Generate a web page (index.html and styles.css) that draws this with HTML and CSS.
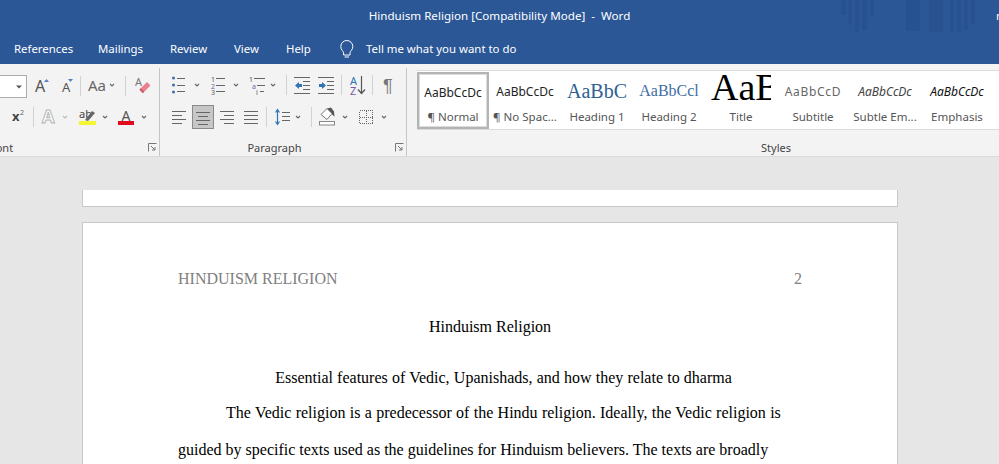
FILE: index.html
```html
<!DOCTYPE html>
<html lang="en">
<head>
<meta charset="utf-8">
<title>Hinduism Religion - Word</title>
<link rel="stylesheet" href="styles.css">
</head>
<body>
<header class="titlebar">
  <svg class="titlebar-art" width="160" height="40">
    <g fill="#234a85" opacity=".42">
      <rect x="1" y="0" width="5" height="15"/><rect x="8" y="0" width="4" height="24"/><rect x="15" y="0" width="4" height="32"/><rect x="22" y="0" width="5" height="30"/><rect x="30" y="0" width="4" height="16"/>
      <rect x="66" y="0" width="14" height="31"/><rect x="89" y="0" width="14" height="37"/><rect x="110" y="0" width="4" height="34"/><rect x="117" y="0" width="4" height="32"/><rect x="124" y="0" width="4" height="30"/><rect x="131" y="0" width="4" height="24"/>
    </g>
  </svg>
  <div class="doc-title">Hinduism Religion [Compatibility Mode]&nbsp; -&nbsp; Word</div>
  <div class="user-cut">n</div>
</header>
<nav class="tabs">
  <span class="tab t-ref">References</span>
  <span class="tab t-mail">Mailings</span>
  <span class="tab t-rev">Review</span>
  <span class="tab t-view">View</span>
  <span class="tab t-help">Help</span>
  <svg class="bulb" width="26" height="20"><path d="M3 16.5v-2.2c0-1.4-2.8-2.8-2.8-6.3a6 6 0 0 1 12 0c0 3.500-2.800 4.900-2.800 6.300v2.200zM4 18.500h4.400" fill="none" stroke="#fff" transform="translate(.6 -.5)"/></svg>
  <span class="tab">Tell me what you want to do</span>
</nav>
<section class="ribbon">
  <div class="group g-font">
    <div class="tool-row">
      <div class="combo"><svg width="8" height="6"><path d="M1 1.500l3 3 3-3z" fill="#555"/></svg></div>
      <svg width="30" height="24"><text x="8" y="19" class="ico-a">A</text><path d="M17 9l2.500-3 2.500 3z" fill="#4f81bd"/></svg>
      <svg width="21" height="24"><text x="5" y="19" class="ico-a small">A</text><path d="M11 6h5l-2.500 3z" fill="#4f81bd"/></svg>
      <svg width="4" height="24"><path d="M2.500 3v20" class="sep"/></svg>
      <svg width="25" height="24"><text x="6" y="18" class="ico-aa">Aa</text></svg>
      <svg width="10" height="24"><path d="M3 11l2 2 2-2" class="chev"/></svg>
      <svg width="16" height="24"><path d="M8.500 3v20" class="sep"/></svg>
      <svg width="18" height="24"><text x="2" y="13" class="ico-mini">A</text><path d="M7 16l7-7 3.500 3.500-7 7h-1z" fill="#ea7f8f"/><path d="M7 16l3.500 3.500" stroke="#c9586b" stroke-width="2"/></svg>
    </div>
    <div class="tool-row">
      <svg width="29" height="24"><text x="12" y="16" class="ico-x">x</text><text x="20" y="10" class="ico-sup">2</text></svg>
      <svg width="8" height="24"><path d="M4.500 2v20" class="sep"/></svg>
      <svg width="23" height="24"><text x="5" y="18" class="ico-outline">A</text></svg>
      <svg width="10" height="24"><path d="M3 11l2 2 2-2" class="chev light"/></svg>
      <svg width="30" height="24"><text x="9" y="13" class="ico-ab">ab</text><path d="M15 15l7-9 3 2-7 8z" fill="#666"/><rect x="9" y="16" width="17" height="4" fill="#f5f532"/></svg>
      <svg width="10" height="24"><path d="M3 11l2 2 2-2" class="chev"/></svg>
      <svg width="29" height="24"><text x="11.500" y="16" class="ico-red">A</text><rect x="8" y="16" width="16" height="4" fill="#e00b1c"/></svg>
      <svg width="10" height="24"><path d="M3 11l2 2 2-2" class="chev"/></svg>
    </div>
    <div class="group-label label-font">
      <span class="label-cut">Font</span>
      <svg class="launcher" width="9" height="9"><path d="M.5 8.500v-8h8M3 3l4 4M4 7h3V4" fill="none" stroke="#777"/></svg>
    </div>
  </div>
  <div class="group g-para">
    <div class="tool-row">
      <svg width="32" height="24"><g fill="#3f6fa8"><circle cx="13.500" cy="5" r="1.500"/><circle cx="13.500" cy="12" r="1.500"/><circle cx="13.500" cy="19" r="1.500"/></g><path d="M17 5.500h8M17 12.500h8M17 18.500h8" class="ln"/></svg>
      <svg width="10" height="24"><path d="M3 11l2 2 2-2" class="chev"/></svg>
      <svg width="29" height="24"><text x="9" y="8.500" class="ico-num">1</text><text x="9" y="15.500" class="ico-num pur">2</text><text x="9" y="22" class="ico-num">3</text><path d="M14 5.500h9M14 12.500h9M14 18.500h9" class="ln"/></svg>
      <svg width="10" height="24"><path d="M3 11l2 2 2-2" class="chev"/></svg>
      <svg width="27" height="24"><text x="8" y="9" class="ico-num">1</text><text x="11" y="15.500" class="ico-num pur">a</text><text x="15" y="22" class="ico-num">i</text><path d="M13 5.500h11M16 12.500h8M19 18.500h4" class="ln"/></svg>
      <svg width="10" height="24"><path d="M3 11l2 2 2-2" class="chev"/></svg>
      <svg width="16" height="24"><path d="M8.500 2v20" class="sep"/></svg>
      <svg width="24" height="24"><path d="M0 4.500h16M9 8.500h7M9 12.500h7M9 16.500h7M0 20.500h16" class="ln"/><path d="M1 12.500l4-3.500v2h3v3H5v2z" fill="#2e75b6"/></svg>
      <svg width="20" height="24"><path d="M0 4.500h16M9 8.500h7M9 12.500h7M9 16.500h7M0 20.500h16" class="ln"/><path d="M8 12.500l-4-3.500v2H1v3h3v2z" fill="#2e75b6"/></svg>
      <svg width="6" height="24"><path d="M3.500 2v20" class="sep"/></svg>
      <svg width="24" height="24"><text x="6" y="12" class="ico-sort">A</text><text x="6" y="22" class="ico-sort pur">Z</text><path d="M17.500 3v17M14 16.500l3.500 4 3.500-4" fill="none" stroke="#555" stroke-width="1.200"/></svg>
      <svg width="8" height="24"><path d="M4.500 2v20" class="sep"/></svg>
      <svg width="24" height="24"><text x="7" y="19" class="ico-pil">¶</text></svg>
    </div>
    <div class="tool-row">
      <svg width="32" height="24"><path d="M12 6.500h14M12 10.500h10M12 14.500h14M12 18.500h10" class="ln"/></svg>
      <svg class="tool-on" width="22" height="24"><path d="M4 7.500h14M6 11.500h10M4 15.500h14M6 19.500h10" class="ln"/></svg>
      <svg width="26" height="24"><path d="M6 6.500h14M10 10.500h10M6 14.500h14M10 18.500h10" class="ln"/></svg>
      <svg width="22" height="24"><path d="M4 6.500h14M4 10.500h14M4 14.500h14M4 18.500h14" class="ln"/></svg>
      <svg width="8" height="24"><path d="M4.500 2v20" class="sep"/></svg>
      <svg width="23" height="24"><path d="M7.500 5v14M5.500 7.500l2-3 2 3M5.500 16.500l2 3 2-3" fill="none" stroke="#2e75b6" stroke-width="1.200"/><path d="M12 7.500h8M12 11.500h8M12 15.500h8" class="ln"/></svg>
      <svg width="10" height="24"><path d="M3 11l2 2 2-2" class="chev"/></svg>
      <svg width="16" height="24"><path d="M8.500 2v20" class="sep"/></svg>
      <svg width="21" height="24"><path d="M2 9.500L8 3.500l5 5-5 6z" fill="#fff" stroke="#777"/><path d="M8 3.500l4-1 3 4 .5 5-2-1.500-1-2z" fill="#555"/><rect x=".5" y="16.500" width="15" height="3.500" fill="#fff" stroke="#888"/></svg>
      <svg width="10" height="24"><path d="M3 11l2 2 2-2" class="chev"/></svg>
      <svg width="29" height="24"><path d="M9.500 5.500h13v13h-13zM16 5.500v13M9.500 12h13" class="dotted"/></svg>
      <svg width="10" height="24"><path d="M3 11l2 2 2-2" class="chev"/></svg>
    </div>
    <div class="group-label label-para">
      <span class="label-center">Paragraph</span>
      <svg class="launcher" width="9" height="9"><path d="M.5 8.500v-8h8M3 3l4 4M4 7h3V4" fill="none" stroke="#777"/></svg>
    </div>
  </div>
  <div class="group g-styles">
    <div class="gallery">
      <div class="style selected"><span class="sample s-normal">AaBbCcDc</span><span class="style-name">¶ Normal</span></div>
      <div class="style"><span class="sample s-normal">AaBbCcDc</span><span class="style-name">¶ No Spac...</span></div>
      <div class="style"><span class="sample s-h1">AaBbC</span><span class="style-name">Heading 1</span></div>
      <div class="style"><span class="sample s-h2">AaBbCcl</span><span class="style-name">Heading 2</span></div>
      <div class="style"><span class="sample s-title">AaB</span><span class="style-name">Title</span></div>
      <div class="style"><span class="sample s-sub">AaBbCcD</span><span class="style-name">Subtitle</span></div>
      <div class="style"><span class="sample s-em1">AaBbCcDc</span><span class="style-name">Subtle Em...</span></div>
      <div class="style"><span class="sample s-em2">AaBbCcDc</span><span class="style-name">Emphasis</span></div>
    </div>
    <div class="group-label label-styles">Styles</div>
  </div>
</section>
<main class="canvas">
  <div class="page page-end"></div>
  <article class="page page-full">
    <div class="running-head"><span>HINDUISM RELIGION</span><span>2</span></div>
    <h1 class="doc-heading">Hinduism Religion</h1>
    <h2 class="doc-sub">Essential features of Vedic, Upanishads, and how they relate to dharma</h2>
    <p class="doc-body">The Vedic religion is a predecessor of the Hindu religion. Ideally, the Vedic religion is guided by specific texts used as the guidelines for Hinduism believers. The texts are broadly</p>
  </article>
</main>
</body>
</html>
```
FILE: styles.css
```css
* { box-sizing: border-box; }
html, body { margin: 0; height: 464px; overflow: hidden; }
body { width: 999px; background: #e6e6e6; font-family: "Noto Sans", "Open Sans", sans-serif; }
svg { display: block; flex: none; }

.titlebar { position: relative; height: 32px; background: #2b5797; color: #fff; display: flex; justify-content: center; align-items: center; font-size: 11.6px; overflow: hidden; }
.titlebar-art { position: absolute; left: 840px; top: 0; }
.doc-title { position: relative; top: -1px; }
.user-cut { position: absolute; left: 996px; top: 8px; }

.tabs { height: 32px; background: #2b5797; color: #fff; display: flex; align-items: center; padding-left: 14px; font-size: 11.4px; }
.t-ref { width: 84px; } .t-mail { width: 72px; } .t-rev { width: 64px; } .t-view { width: 52px; } .t-help { width: 54px; }
.bulb { margin-top: 1px; }

.ribbon { height: 93px; background: #f3f3f3; border-bottom: 1px solid #dadada; display: flex; }
.group { position: relative; flex: none; border-right: 1px solid #c6c6c6; height: 88px; margin-top: 4px; padding-top: 5px; }
.g-font { width: 160px; }
.g-para { width: 247px; }
.g-styles { width: 592px; border-right: 0; padding: 2px 0 0 10px; }
.tool-row { display: flex; height: 24px; margin-bottom: 8px; }
.combo { width: 27px; height: 23px; margin-top: 2px; background: #fff; border: 1px solid #ababab; border-left: 0; display: flex; justify-content: flex-end; align-items: center; padding-right: 3px; }
.tool-on { background: #c6c6c6; outline: 1px solid #8a8a8a; outline-offset: -1px; }

.sep { stroke: #d2d2d2; fill: none; }
.chev { stroke: #666; fill: none; stroke-width: 1.100; }
.chev.light { stroke: #bbb; }
.ln { stroke: #666; fill: none; }
.dotted { fill: none; stroke: #666; stroke-dasharray: 1 1; shape-rendering: crispEdges; }

text { font-family: "Noto Sans", sans-serif; }
.ico-a { font-size: 16px; fill: #555; }
.ico-a.small { font-size: 13px; }
.ico-aa { font-size: 15px; fill: #666; }
.ico-mini { font-size: 11px; fill: #777; }
.ico-x { font-size: 13px; font-weight: 700; fill: #444; }
.ico-sup { font-size: 7px; fill: #666; }
.ico-outline { font-size: 18px; font-weight: 700; fill: #fff; stroke: #b4b4b4; stroke-width: 1; }
.ico-ab { font-size: 11px; fill: #444; }
.ico-red { font-size: 14px; fill: #555; }
.ico-num { font-size: 7px; fill: #555; }
.ico-num.pur, .ico-sort.pur { fill: #7b5aa6; }
.ico-sort { font-size: 11px; fill: #2e75b6; }
.ico-pil { font-size: 18px; fill: #777; font-family: "Liberation Sans", sans-serif; }

.group-label { position: absolute; left: 0; right: 0; top: 73px; height: 14px; font-size: 11px; line-height: 14px; color: #444; }
.label-font, .label-para { display: flex; align-items: center; }
.label-cut { margin-left: -10px; }
.label-center { position: absolute; left: 0; right: 0; text-align: center; padding-right: 17px; }
.launcher { position: absolute; right: 2px; top: 2px; }
.label-styles { padding-left: 146px; text-align: center; }

.gallery { display: flex; height: 60px; background: #fff; border-top: 1px solid #dcdcdc; border-bottom: 1px solid #dcdcdc; }
.style { width: 72px; flex: none; display: flex; flex-direction: column; align-items: center; overflow: hidden; }
.style.selected { border: 2px solid #b4b4b4; outline: 1px solid #dcdcdc; outline-offset: -3px; margin-top: 1px; height: 57px; }
.sample { height: 38px; width: 60px; padding-top: 2px; display: flex; justify-content: center; align-items: center; white-space: nowrap; overflow: hidden; font-size: 12px; color: #222; flex: none; }
.style.selected .sample { height: 35px; }
.style-name { font-size: 11.500px; color: #555; white-space: nowrap; line-height: 16px; }
.s-h1 { font-family: "Liberation Serif", serif; font-size: 20px; color: #2e5f94; }
.s-h2 { font-family: "Liberation Serif", serif; font-size: 16px; color: #3e6ea4; }
.s-title { font-family: "Liberation Serif", serif; font-size: 38px; color: #000; justify-content: flex-start; padding: 0 0 6px; height: 30px; margin: 4px 0; line-height: 28px; }
.s-sub { letter-spacing: .7px; color: #666; }
.s-em1 { font-style: italic; color: #444; }
.s-em2 { font-style: italic; color: #111; }

.canvas { padding: 33px 101px 0 82px; display: flex; flex-direction: column; gap: 15px; font-family: "Liberation Serif", serif; }
.page { background: #fff; border: 1px solid #c8c8c8; flex: none; }
.page-end { height: 17px; border-top: 0; }
.page-full { height: 400px; padding: 46px 95px 0 95px; border-bottom: 0; }
.running-head { display: flex; justify-content: space-between; font-size: 16px; line-height: 20px; color: #7f7f7f; }
.doc-heading, .doc-sub { margin: 0; text-align: center; font-size: 16px; font-weight: 400; color: #000; line-height: 20px; }
.doc-heading { margin-top: 28px; }
.doc-sub { margin-top: 31px; padding-left: 27px; word-spacing: .2px; }
.doc-body { margin: 6px 0 0; font-size: 16px; line-height: 37px; text-indent: 48px; color: #000; }
.doc-body::first-line { word-spacing: .33px; }
```
